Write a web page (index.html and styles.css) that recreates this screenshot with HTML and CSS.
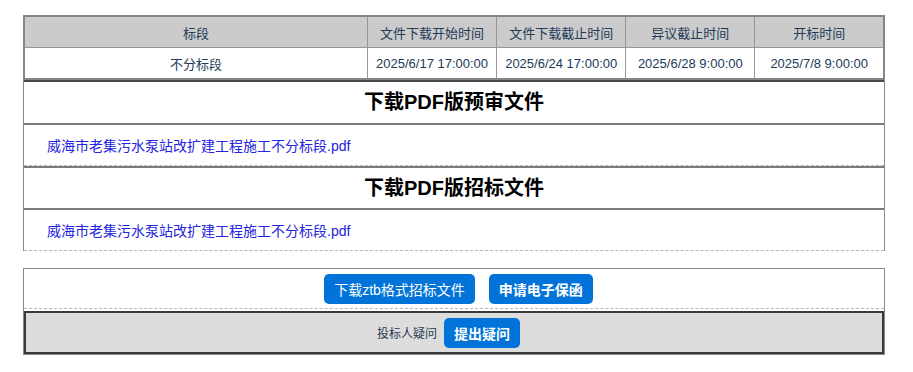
FILE: index.html
```html
<!DOCTYPE html>
<html>
<head>
    <title>招标文件下载</title>
    <link rel="stylesheet" href="styles.css">
</head>
<body>
    <div class="page">
        <table class="info-table">
            <tr>
                <th class="col-name">标段</th>
                <th>文件下载开始时间</th>
                <th>文件下载截止时间</th>
                <th>异议截止时间</th>
                <th>开标时间</th>
            </tr>
            <tr>
                <td>不分标段</td>
                <td>2025/6/17 17:00:00</td>
                <td>2025/6/24 17:00:00</td>
                <td>2025/6/28 9:00:00</td>
                <td>2025/7/8 9:00:00</td>
            </tr>
        </table>

        <div class="files">
            <div class="file-title first">下载PDF版预审文件</div>
            <div class="file-row">
                <a href="#" class="file-link">威海市老集污水泵站改扩建工程施工不分标段.pdf</a>
            </div>
            <div class="file-title">下载PDF版招标文件</div>
            <div class="file-row">
                <a href="#" class="file-link">威海市老集污水泵站改扩建工程施工不分标段.pdf</a>
            </div>
        </div>

        <div class="actions">
            <div class="action-row">
                <button class="btn">下载ztb格式招标文件</button>
                <button class="btn bold">申请电子保函</button>
            </div>
            <div class="question-row">
                <span class="question-label">投标人疑问</span>
                <button class="btn bold">提出疑问</button>
            </div>
        </div>
    </div>
</body>
</html>
```

FILE: styles.css
```css
body {
    margin: 0;
    font-family: "Liberation Sans", "Noto Sans CJK SC", sans-serif;
    background-color: #fff;
}
.page {
    width: 862px;
    padding: 15px 0 0 23px;
}
.info-table {
    width: 862px;
    table-layout: fixed;
    border-collapse: collapse;
    border: 2px solid #858585;
    font-size: 13px;
    color: #223a58;
}
.info-table th, .info-table td {
    border: 1px solid #969696;
    height: 30px;
    padding: 0;
    text-align: center;
    font-weight: normal;
}
.info-table th {
    background-color: #cbcbcb;
}
.col-name {
    width: 342px;
}
.files {
    border-left: 1px solid #8a8a8a;
    border-right: 1px solid #8a8a8a;
}
.file-title {
    height: 40px;
    line-height: 40px;
    text-align: center;
    font-size: 20px;
    font-weight: bold;
    color: #000;
    border-top: 2px solid #7a7a7a;
    border-bottom: 2px solid #7a7a7a;
}
.file-title.first {
    border-top-color: #4a4a4a;
    height: 41px;
    line-height: 41px;
}
.file-row {
    height: 40px;
    display: flex;
    align-items: center;
    padding-left: 23px;
    border-bottom: 1px dashed #b5b5b5;
}
.file-link {
    font-size: 14px;
    color: #2323e0;
    text-decoration: none;
}
.actions {
    margin-top: 17px;
    border: 1px solid #8a8a8a;
}
.action-row {
    height: 39px;
    display: flex;
    justify-content: center;
    align-items: center;
    gap: 14px;
    padding-left: 9px;
    border-bottom: 1px dashed #b5b5b5;
}
.question-row {
    margin-top: 2px;
    height: 39px;
    display: flex;
    justify-content: center;
    align-items: center;
    gap: 7px;
    padding-right: 11px;
    background-color: #dddddd;
    border: 2px solid #3a3a3a;
}
.question-label {
    font-size: 12px;
    color: #2a3a4e;
}
.btn {
    height: 30px;
    padding: 0 10px;
    background-color: #0274d9;
    color: #fff;
    border: none;
    border-radius: 5px;
    font-family: "Liberation Sans", "Noto Sans CJK SC", sans-serif;
    font-size: 14px;
    cursor: pointer;
}
.btn.bold {
    font-weight: bold;
}
```
